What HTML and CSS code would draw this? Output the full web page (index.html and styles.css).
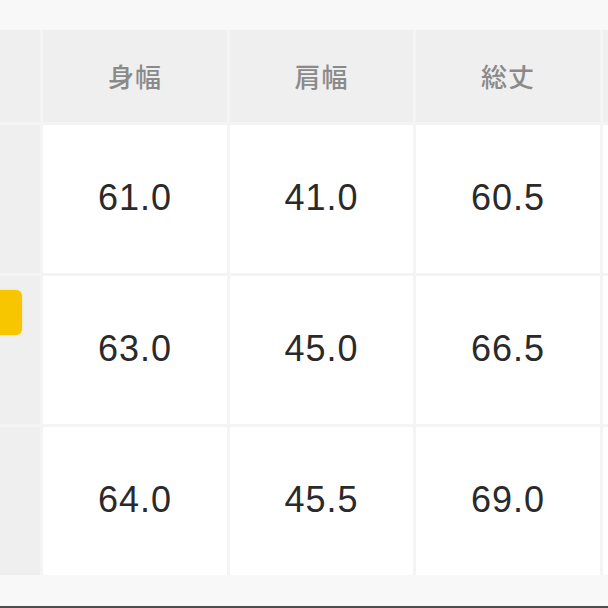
FILE: index.html
```html
<!DOCTYPE html>
<html lang="ja">
<head>
<meta charset="utf-8">
<link rel="stylesheet" href="styles.css">
</head>
<body>
<div class="page">
  <div class="size-table">
    <div class="cell label head"></div>
    <div class="cell head">身幅</div>
    <div class="cell head">肩幅</div>
    <div class="cell head">総丈</div>
    <div class="cell head"></div>

    <div class="cell label"></div>
    <div class="cell num">61.0</div>
    <div class="cell num">41.0</div>
    <div class="cell num">60.5</div>
    <div class="cell num"></div>

    <div class="cell label"><span class="badge"></span></div>
    <div class="cell num">63.0</div>
    <div class="cell num">45.0</div>
    <div class="cell num">66.5</div>
    <div class="cell num"></div>

    <div class="cell label"></div>
    <div class="cell num">64.0</div>
    <div class="cell num">45.5</div>
    <div class="cell num">69.0</div>
    <div class="cell num"></div>
  </div>
  <div class="footer-band"></div>
  <div class="bottom-line"></div>
</div>
</body>
</html>
```

FILE: styles.css
```css
html, body {
  margin: 0;
  padding: 0;
  width: 608px;
  height: 608px;
  overflow: hidden;
  background: #f8f8f8;
}

.page {
  padding-top: 30px;
  width: 608px;
  overflow: hidden;
}

.size-table {
  display: grid;
  grid-template-columns: 40px 184px 183px 184px 40px;
  grid-template-rows: 92px 148px 148px 148px;
  gap: 3px;
  background: #f4f4f4;
  width: 640px;
}

.cell {
  display: flex;
  align-items: center;
  justify-content: center;
  background: #ffffff;
  position: relative;
}

.cell.head {
  background: #efefef;
  color: #8a8a8a;
  font-family: "Noto Sans CJK JP", "Noto Sans", sans-serif;
  font-size: 26px;
  font-weight: 500;
  letter-spacing: 1px;
  padding-bottom: 2px;
}

.cell.label {
  background: #efefef;
}

.cell.num {
  color: #2a2a2a;
  font-family: "Liberation Sans", Arial, sans-serif;
  font-size: 36px;
  letter-spacing: 1px;
  padding-bottom: 2px;
}

.badge {
  position: absolute;
  left: 0;
  top: 14px;
  width: 22px;
  height: 45px;
  background: #f7c600;
  border-radius: 0 6px 6px 0;
  box-shadow: 0 0 2px rgba(247, 198, 0, 0.5);
}

.footer-band {
  height: 31px;
  background: #f8f8f8;
}

.bottom-line {
  height: 2px;
  background: #4d4d4d;
}
```
